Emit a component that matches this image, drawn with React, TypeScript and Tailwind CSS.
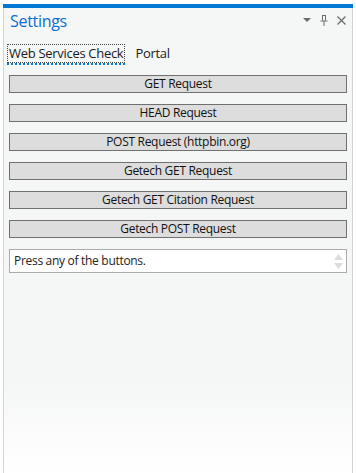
import React from 'react';

const buttons = [
  'GET Request',
  'HEAD Request',
  'POST Request (httpbin.org)',
  'Getech GET Request',
  'Getech GET Citation Request',
  'Getech POST Request',
];

const font = { fontFamily: '"Open Sans", "Noto Sans", sans-serif' };

export default function App() {
  return (
    <div className="w-[356px] h-[473px] bg-white pt-[4px] px-[3px]" style={font}>
      <div className="h-[469px] flex flex-col border-x border-[#d4d4d4] bg-gradient-to-b from-[#f5f6f6] from-80% to-white">
        <div className="h-[4px] bg-[#0078d4] -mx-px" />
        <div className="flex items-center justify-between pl-[6px] pr-[6px] h-[23px]">
          <span className="text-[16px] text-[#0a6ed1] tracking-[-0.3px] leading-none mt-[2px]">Settings</span>
          <div className="flex items-center gap-[9px] text-[#6d6d6d] mt-[2px]">
            <svg width="8" height="5" viewBox="0 0 8 5"><path d="M0 0h8L4 4z" fill="#6d6d6d" /></svg>
            <svg width="8" height="11" viewBox="0 0 8 11">
              <path d="M2 0.5h4M2.5 0.5v5M5.5 0.5v5M0.5 6h7M4 6v5" stroke="#6d6d6d" strokeWidth="1" fill="none" />
            </svg>
            <svg width="9" height="9" viewBox="0 0 9 9">
              <path d="M0.5 0.5l8 8M8.5 0.5l-8 8" stroke="#6d6d6d" strokeWidth="1.3" />
            </svg>
          </div>
        </div>
        <div className="flex items-end gap-[10px] pl-[3px] mt-[13px]">
          <div className="flex flex-col">
            <span className="border border-dotted border-[#444] px-px text-[13px] leading-[17px] text-[#1a1a1a] tracking-[-0.3px]">
              Web Services Check
            </span>
            <div className="h-[2px] border-b-2 border-dotted border-[#0078d4]" />
          </div>
          <span className="text-[13px] leading-[17px] text-[#1a1a1a] tracking-[-0.3px] mb-[3px]">Portal</span>
        </div>
        <div className="flex flex-col gap-[11px] px-[5px] mt-[10px]">
          {buttons.map((b) => (
            <button
              key={b}
              className="h-[18px] border border-[#707070] bg-[#dddddd] text-[12px] leading-none text-[#111] tracking-[-0.3px] flex items-center justify-center"
            >
              {b}
            </button>
          ))}
          <div className="h-[24px] bg-white border border-[#ababab] flex items-center justify-between pl-[4px] pr-[3px]">
            <span className="text-[12px] text-[#222] tracking-[-0.3px]">Press any of the buttons.</span>
            <div className="flex flex-col gap-[3px]">
              <svg width="9" height="6" viewBox="0 0 9 6"><path d="M4.5 0L9 6H0z" fill="#dcdcdc" /></svg>
              <svg width="9" height="6" viewBox="0 0 9 6"><path d="M0 0h9L4.5 6z" fill="#dcdcdc" /></svg>
            </div>
          </div>
        </div>
      </div>
    </div>
  );
}
